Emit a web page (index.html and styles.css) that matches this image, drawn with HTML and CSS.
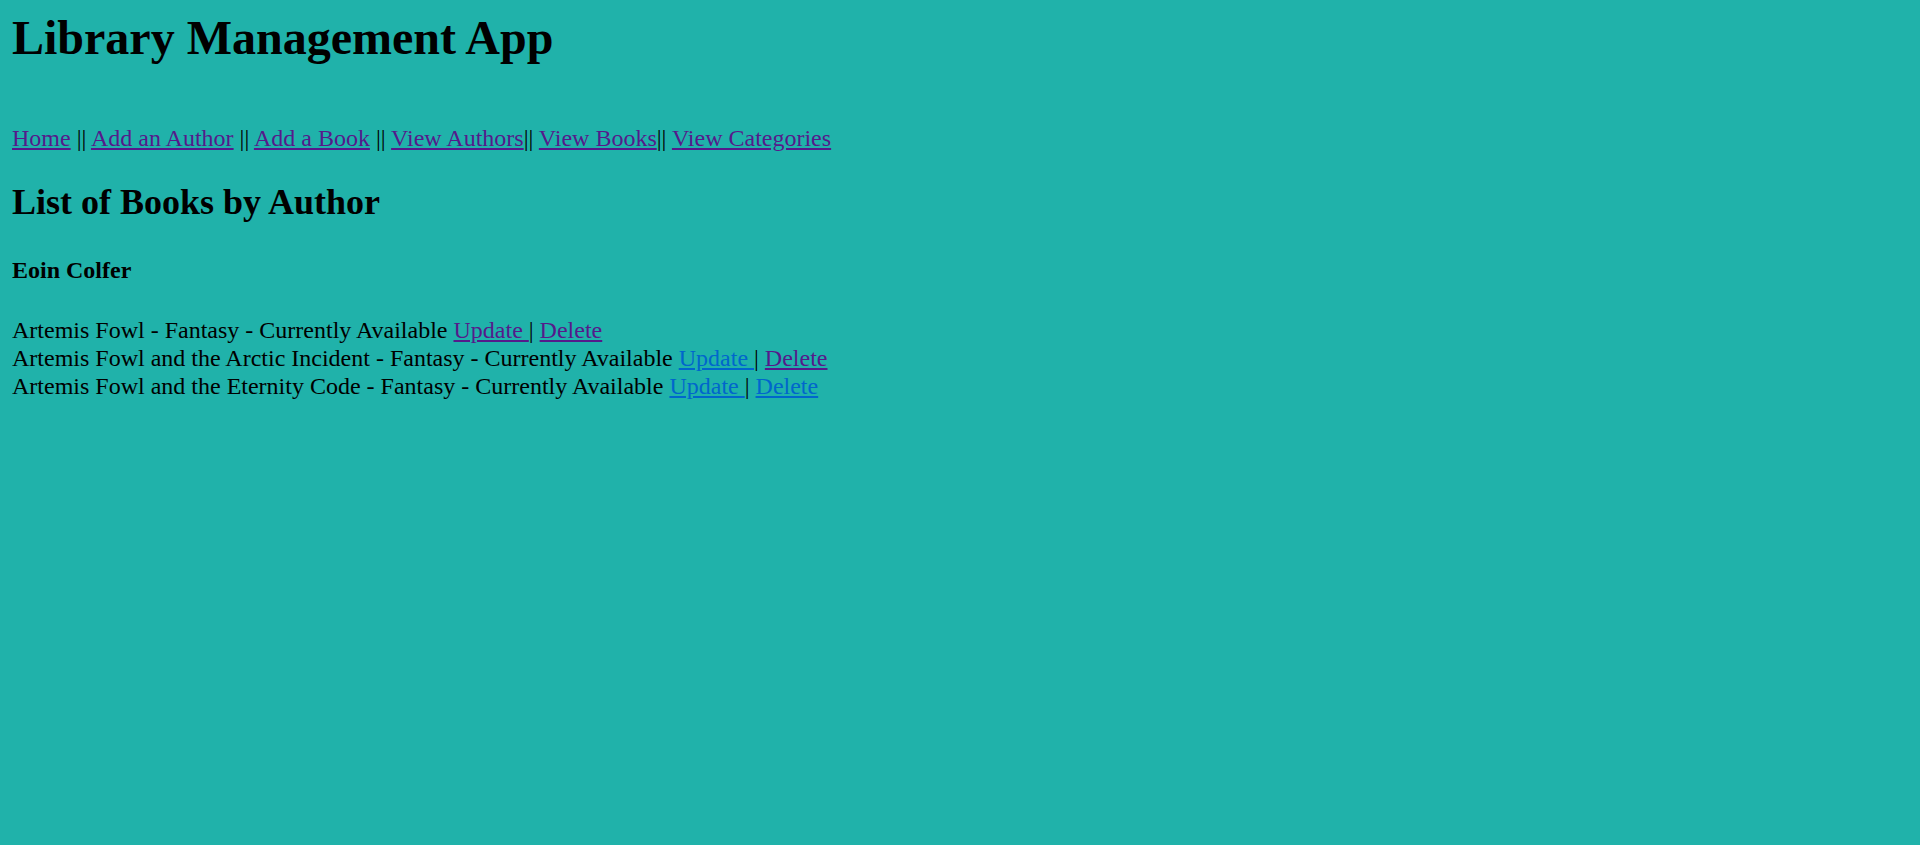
FILE: index.html
```html
<!DOCTYPE html>
<html lang="en">
<head>
<meta charset="utf-8">
<title>Library Management App</title>
<link rel="stylesheet" href="styles.css">
</head>
<body>
<h1 class="title">Library Management App</h1>
<nav class="nav">
<a class="link visited" href="#">Home</a> || <a class="link visited" href="#">Add an Author</a> || <a class="link visited" href="#">Add a Book</a> || <a class="link visited" href="#">View Authors</a>|| <a class="link visited" href="#">View Books</a>|| <a class="link visited" href="#">View Categories</a>
</nav>
<h2 class="section-title">List of Books by Author</h2>
<h4 class="author">Eoin Colfer</h4>
<div class="books">
<div class="book">Artemis Fowl - Fantasy - Currently Available <a class="link visited" href="#">Update </a> | <a class="link visited" href="#">Delete</a></div>
<div class="book">Artemis Fowl and the Arctic Incident - Fantasy - Currently Available <a class="link" href="#">Update </a> | <a class="link visited" href="#">Delete</a></div>
<div class="book">Artemis Fowl and the Eternity Code - Fantasy - Currently Available <a class="link" href="#">Update </a> | <a class="link" href="#">Delete</a></div>
</div>
</body>
</html>
```
FILE: styles.css
```css
html, body {
  background: #20b2aa;
}
body {
  margin: 10px 12px;
  font-family: "Liberation Serif", "Times New Roman", serif;
  font-size: 24px;
  line-height: 28px;
  color: #000;
}
.title {
  font-size: 48px;
  line-height: 55px;
  font-weight: bold;
  margin: 0 0 59px 0;
}
.nav {
  margin: 0;
}
.section-title {
  font-size: 36px;
  line-height: 41px;
  font-weight: bold;
  margin: 30px 0 0 0;
}
.author {
  font-size: 24px;
  line-height: 28px;
  font-weight: bold;
  margin: 33px 0 0 0;
}
.books {
  margin-top: 32px;
}
.link {
  color: #0066cc;
  text-decoration: underline;
}
.link.visited {
  color: #551a8b;
}
```
